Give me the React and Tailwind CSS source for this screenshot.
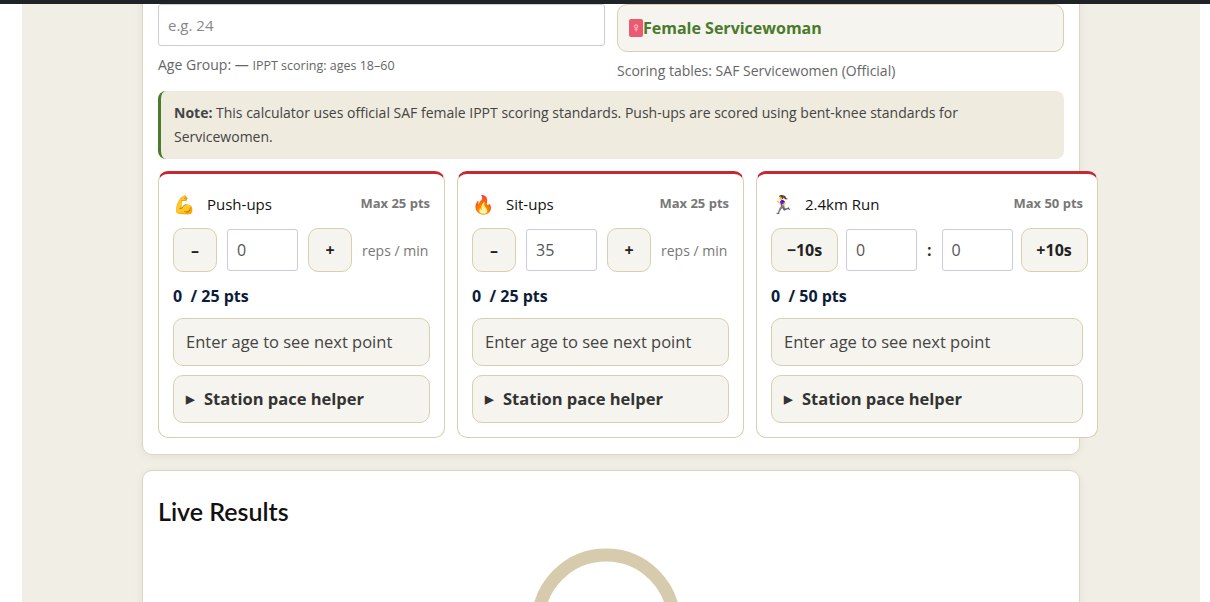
export default function App() {
  const font = { fontFamily: '"Open Sans", "Noto Sans", sans-serif' };
  const Btn = ({ children, w = "w-[44px]" }) => (
    <div className={`${w} h-[44px] shrink-0 rounded-[10px] border border-[#d9cfae] bg-[#f6f4ee] flex items-center justify-center font-bold text-[16px] text-[#222]`}>{children}</div>
  );
  const Inp = ({ v, w = "w-[71px]" }) => (
    <div className={`${w} h-[42px] shrink-0 rounded-[3px] border border-[#c9cbe0] bg-white flex items-center px-[9px] text-[16px] text-[#555]`}>{v}</div>
  );
  const Card = ({ icon, title, max, w, controls, pts, gap = "gap-[10px]" }) => (
    <div className={`${w} shrink-0 rounded-[10px] border border-[#d9cfae] border-t-[3px] border-t-[#c62832] bg-white px-[14px] pt-[16px] pb-[14px]`}>
      <div className="flex items-center justify-between h-[28px]">
        <div className="flex items-center gap-[12px] text-[15px] text-[#111]"><span className="text-[18px]">{icon}</span>{title}</div>
        <span className="text-[13px] font-bold text-[#777]">Max {max} pts</span>
      </div>
      <div className={`mt-[10px] flex items-center ${gap} h-[44px]`}>{controls}</div>
      <div className="mt-[12px] text-[16px] font-bold text-[#0c1d3a]">0&nbsp; / {pts} pts</div>
      <div className="mt-[10px] h-[48px] rounded-[10px] border border-[#d9cfae] bg-[#f6f4ee] flex items-center px-[12px] text-[16.5px] text-[#444]">Enter age to see next point</div>
      <div className="mt-[9px] h-[48px] rounded-[10px] border border-[#d9cfae] bg-[#f6f4ee] flex items-center px-[12px] text-[16.5px] font-bold text-[#333]"><span className="text-[11px] mr-[10px]">▶</span>Station pace helper</div>
    </div>
  );
  return (
    <div className="w-[1210px] h-[602px] overflow-hidden bg-white relative" style={font}>
      <div className="absolute top-0 left-0 right-0 h-[4px] bg-[#1f2328] z-10" />
      <div className="ml-[22px] w-[1178px] h-full bg-[#f1efe5] overflow-hidden">
        <div className="ml-[120px] w-[938px] -mt-[30px]">
          <div className="bg-white rounded-[10px] border border-[#ddd6bf] shadow-[0_2px_10px_rgba(0,0,0,0.06)] px-[15px] pt-[33px] pb-[16px]">
            <div className="grid grid-cols-2 gap-[12px]">
              <div>
                <div className="h-[42px] rounded-[3px] border border-[#c9cbe0] flex items-center px-[9px] text-[15px] text-[#888]">e.g. 24</div>
                <div className="mt-[8px] text-[14px] text-[#666]">Age Group: — <span className="text-[12.5px]">IPPT scoring: ages 18–60</span></div>
              </div>
              <div>
                <div className="h-[48px] rounded-[10px] border border-[#d9cfae] bg-[#f6f4ee] flex items-center px-[11px] text-[16px] font-bold text-[#4a7a2c]">
                  <span className="inline-flex w-[14px] h-[18px] bg-[#ea5a70] text-white text-[13px] rounded-[2px] items-center justify-center">♀</span>Female Servicewoman
                </div>
                <div className="mt-[8px] text-[14px] text-[#666]">Scoring tables: SAF Servicewomen (Official)</div>
              </div>
            </div>
            <div className="mt-[10px] rounded-[8px] border-l-[3px] border-[#4a7a2c] bg-[#efebdf] px-[13px] py-[10px] text-[14px] leading-[24px] text-[#444]">
              <b>Note:</b> This calculator uses official SAF female IPPT scoring standards. Push-ups are scored using bent-knee standards for Servicewomen.
            </div>
            <div className="mt-[12px] flex gap-[12px] w-[960px]">
              <Card icon="💪" title="Push-ups" max={25} pts={25} w="w-[287px]" controls={<><Btn>–</Btn><Inp v="0" /><Btn>+</Btn><span className="text-[14px] text-[#777]">reps / min</span></>} />
              <Card icon="🔥" title="Sit-ups" max={25} pts={25} w="w-[287px]" controls={<><Btn>–</Btn><Inp v="35" /><Btn>+</Btn><span className="text-[14px] text-[#777]">reps / min</span></>} />
              <Card icon="🏃‍♀️" title="2.4km Run" max={50} pts={50} w="w-[342px]" gap="gap-[8px]" controls={<><Btn w="w-[67px]">−10s</Btn><Inp v="0" /><span className="font-bold text-[#333] px-[2px]">:</span><Inp v="0" /><Btn w="w-[67px]">+10s</Btn></>} />
            </div>
          </div>
          <div className="mt-[15px] bg-white rounded-[10px] border border-[#ddd6bf] shadow-[0_2px_10px_rgba(0,0,0,0.06)] px-[15px] pt-[22px] h-[200px]">
            <div className="text-[25px] font-semibold text-[#111]" style={{ fontFamily: '"Lato", sans-serif' }}>Live Results</div>
            <div className="flex justify-center mt-[12px]">
              <svg width="160" height="160" className="-ml-[10px]"><circle cx="80" cy="80" r="68" fill="none" stroke="#d6ccad" strokeWidth="13" /></svg>
            </div>
          </div>
        </div>
      </div>
    </div>
  );
}
